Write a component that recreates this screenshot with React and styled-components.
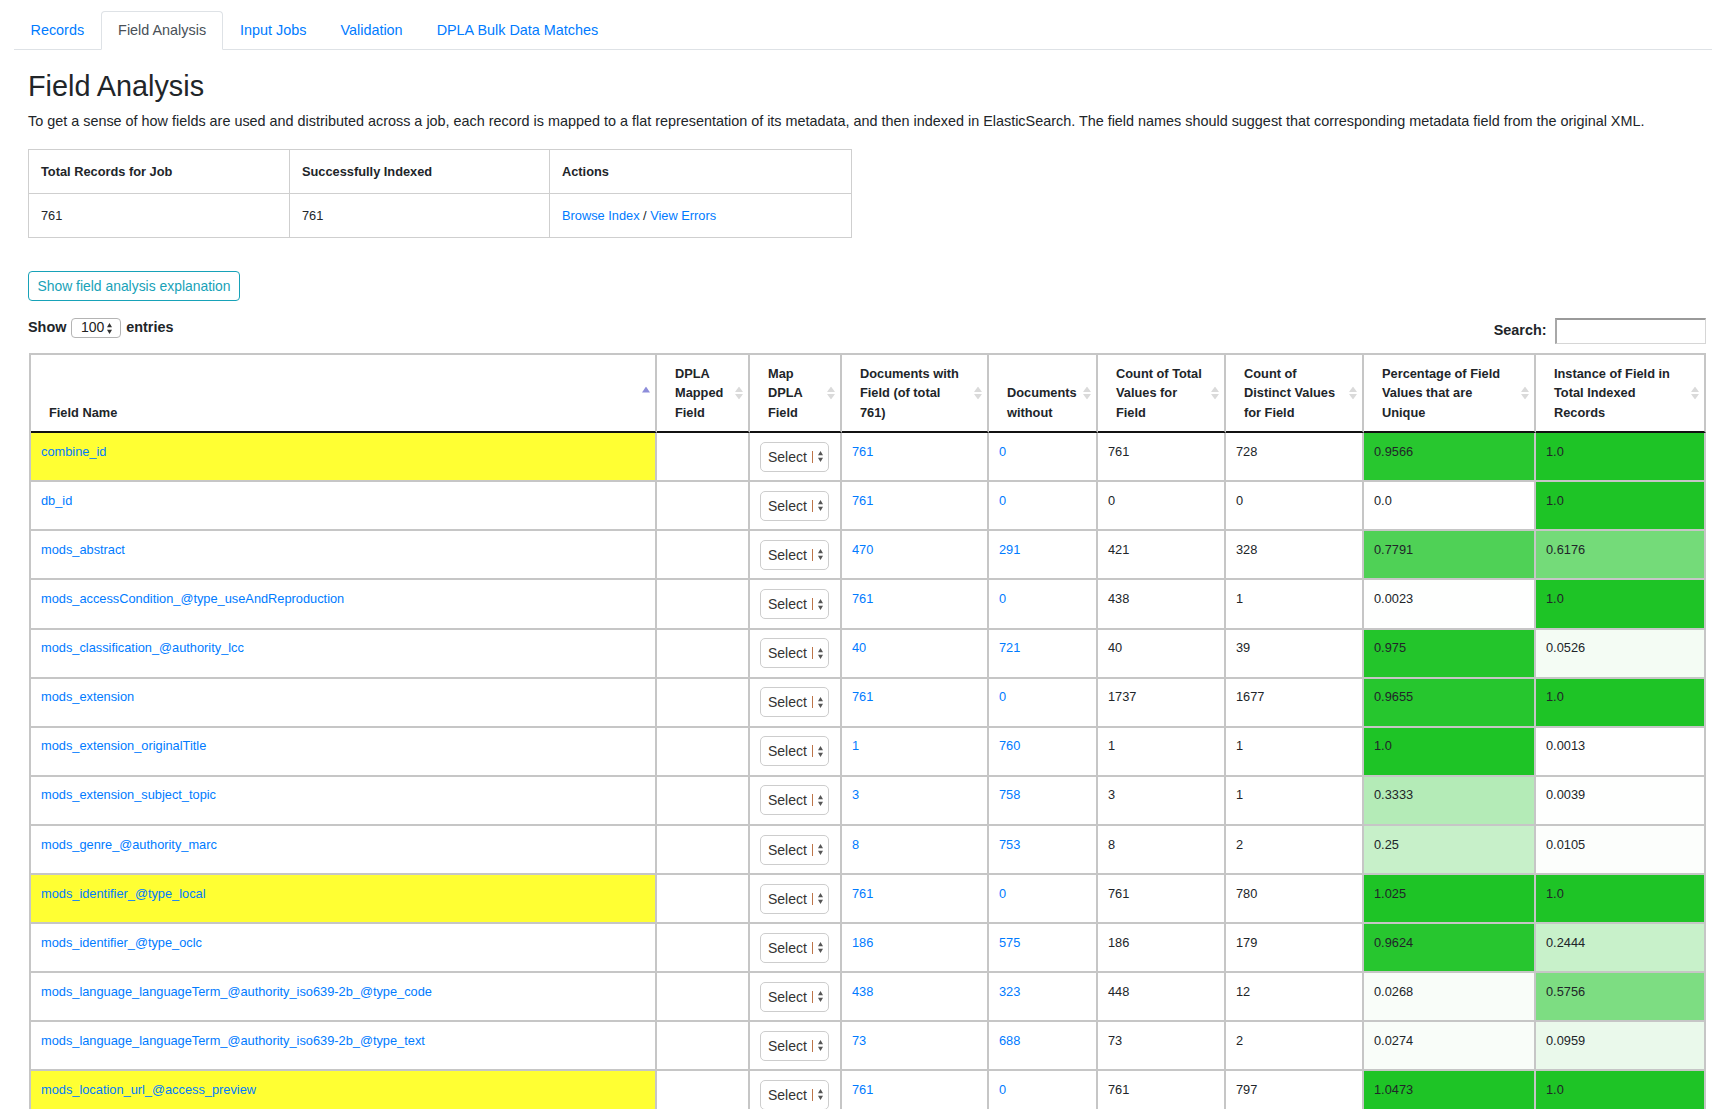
import React from "react";
import styled, { createGlobalStyle } from "styled-components";

const GlobalStyle = createGlobalStyle`
  html { scrollbar-width: none; }
  html::-webkit-scrollbar, body::-webkit-scrollbar { display: none; }
  body {
    margin: 0;
    background: #fff;
    color: #212529;
    font-family: "Liberation Sans", Arial, Helvetica, sans-serif;
    font-size: 14.4px;
    line-height: 1.5;
  }
  * { box-sizing: border-box; }
`;

const Page = styled.div`
  padding-left: 13.5px;
`;

const Tabs = styled.nav`
  display: flex;
  margin-top: 10.7px;
  border-bottom: 1px solid #dee2e6;
`;

const Tab = styled.a`
  display: block;
  margin-bottom: -1px;
  padding: 8px 16px;
  font-size: 14.4px;
  line-height: 21.6px;
  text-decoration: none;
  border: 1px solid transparent;
  border-radius: 4px 4px 0 0;
  color: ${(p) => (p.$active ? "#495057" : "#007bff")};
  background: ${(p) => (p.$active ? "#fff" : "transparent")};
  border-color: ${(p) => (p.$active ? "#dee2e6 #dee2e6 #fff" : "transparent")};
  cursor: pointer;
`;

const Content = styled.main`
  padding-left: 14.5px;
  width: 1692.5px;
`;

const Title = styled.h2`
  margin: 19.2px 0 7px;
  font-size: 28.8px;
  font-weight: 400;
  line-height: 1.2;
`;

const Intro = styled.p`
  margin: 0 0 16.3px;
  font-size: 14.4px;
  line-height: 21.6px;
`;

const SummaryTable = styled.table`
  border-collapse: separate;
  border-spacing: 0;
  table-layout: fixed;
  width: 824px;
  border-top: 1px solid #cfcfcf;
  border-left: 1px solid #cfcfcf;
  font-size: 12.8px;
  line-height: 19.2px;
`;

const SummaryCell = styled.td`
  width: ${(p) => p.$w}px;
  padding: 12px;
  border-right: 1px solid #cfcfcf;
  border-bottom: 1px solid #cfcfcf;
  text-align: left;
  vertical-align: top;
  font-weight: ${(p) => (p.$head ? 700 : 400)};
`;

const Link = styled.a`
  color: #007bff;
  text-decoration: none;
  cursor: pointer;
`;

const OutlineButton = styled.button`
  display: inline-block;
  margin-top: 33px;
  padding: 3.5px 8.5px;
  font-family: inherit;
  font-size: 13.9px;
  line-height: 21px;
  color: #17a2b8;
  background: #fff;
  border: 1px solid #17a2b8;
  border-radius: 4px;
  cursor: pointer;
`;

const Toolbar = styled.div`
  display: flex;
  justify-content: space-between;
  align-items: flex-start;
  margin-top: 16.6px;
  font-size: 14.4px;
  font-weight: 700;
`;

const LengthGroup = styled.label`
  display: flex;
  align-items: center;
  gap: 5px;
  margin-top: -0.5px;
  line-height: 21.6px;
`;

const SearchGroup = styled.label`
  display: flex;
  align-items: center;
  gap: 8px;
  margin-right: 0.5px;
`;

const SearchInput = styled.input`
  width: 151px;
  height: 26px;
  padding: 2px 4px;
  font-family: inherit;
  font-size: 13px;
  border-style: solid;
  border-width: 2px 1px 1px 2px;
  border-color: #9a9a9a #d6d6d6 #d6d6d6 #a8a8a8;
  background: #fff;
  outline: none;
`;

const MiniSelect = styled.span`
  display: inline-flex;
  align-items: center;
  gap: 3px;
  height: 19.6px;
  padding: 0 8px 0 8.5px;
  font-weight: 400;
  font-size: 14px;
  color: #222;
  border: 1px solid #b4b4b4;
  border-radius: 4px;
  background: #fff;
`;

const DataTable = styled.table`
  margin: 8.7px 0 0 1px;
  border-collapse: separate;
  border-spacing: 0;
  table-layout: fixed;
  width: 1677px;
  border-top: 2px solid #c6c6c6;
  border-left: 2px solid #c6c6c6;
  font-size: 12.8px;
  line-height: 19.2px;
`;

const HeadCell = styled.th`
  position: relative;
  width: ${(p) => p.$w}px;
  padding: 9.5px 19px 9.5px 18px;
  border-right: 2px solid #c6c6c6;
  border-bottom: 2px solid #111;
  text-align: left;
  vertical-align: bottom;
  font-weight: 700;
  cursor: pointer;
`;

const SortIcon = styled.svg`
  position: absolute;
  right: 5.5px;
  top: 50%;
  transform: translateY(-50%);
  display: block;
`;

const BodyCell = styled.td`
  padding: 8.56px 10px;
  border-right: 2px solid #c6c6c6;
  border-bottom: 2px solid #c6c6c6;
  vertical-align: top;
  white-space: nowrap;
  overflow: hidden;
  background: ${(p) => p.$bg || "transparent"};
`;

const FieldSelect = styled.span`
  display: inline-flex;
  align-items: center;
  height: 30px;
  padding: 0 5px 0 7px;
  gap: 5px;
  font-size: 14px;
  color: #333;
  border: 1px solid #cdcdcd;
  border-radius: 5px;
  background: #fff;
  cursor: pointer;
`;

const SelectText = styled.span`
  line-height: 20px;
`;

const SelectBar = styled.span`
  display: block;
  width: 1px;
  height: 12px;
  background: #bd7448;
`;

const Arrows = ({ color = "#555" }) => (
  <svg width="5" height="11" viewBox="0 0 5 11" aria-hidden="true">
    <polygon points="0,4.3 2.5,0 5,4.3" fill={color} />
    <polygon points="0,6.7 2.5,11 5,6.7" fill={color} />
  </svg>
);

const SortBoth = () => (
  <SortIcon width="8" height="13" viewBox="0 0 8 13" aria-hidden="true">
    <polygon points="0,5.5 4,0 8,5.5" fill="#dadada" />
    <polygon points="0,7.5 4,13 8,7.5" fill="#dadada" />
  </SortIcon>
);

const SortAsc = () => (
  <SortIcon width="8" height="13" viewBox="0 0 8 13" aria-hidden="true">
    <polygon points="0,6 4,0 8,6" fill="#8d8dda" />
  </SortIcon>
);

const columns = [
  { label: "Field Name", w: 626, asc: true },
  { label: "DPLA Mapped Field", w: 93 },
  { label: "Map DPLA Field", w: 92 },
  { label: "Documents with Field (of total 761)", w: 147 },
  { label: "Documents without", w: 109 },
  { label: "Count of Total Values for Field", w: 128 },
  { label: "Count of Distinct Values for Field", w: 138 },
  { label: "Percentage of Field Values that are Unique", w: 172 },
  { label: "Instance of Field in Total Indexed Records", w: 170 },
];

const rows = [
  ["combine_id", true, "761", "0", "761", "728", "0.9566", "1.0"],
  ["db_id", false, "761", "0", "0", "0", "0.0", "1.0"],
  ["mods_abstract", false, "470", "291", "421", "328", "0.7791", "0.6176"],
  ["mods_accessCondition_@type_useAndReproduction", false, "761", "0", "438", "1", "0.0023", "1.0"],
  ["mods_classification_@authority_lcc", false, "40", "721", "40", "39", "0.975", "0.0526"],
  ["mods_extension", false, "761", "0", "1737", "1677", "0.9655", "1.0"],
  ["mods_extension_originalTitle", false, "1", "760", "1", "1", "1.0", "0.0013"],
  ["mods_extension_subject_topic", false, "3", "758", "3", "1", "0.3333", "0.0039"],
  ["mods_genre_@authority_marc", false, "8", "753", "8", "2", "0.25", "0.0105"],
  ["mods_identifier_@type_local", true, "761", "0", "761", "780", "1.025", "1.0"],
  ["mods_identifier_@type_oclc", false, "186", "575", "186", "179", "0.9624", "0.2444"],
  ["mods_language_languageTerm_@authority_iso639-2b_@type_code", false, "438", "323", "448", "12", "0.0268", "0.5756"],
  ["mods_language_languageTerm_@authority_iso639-2b_@type_text", false, "73", "688", "73", "2", "0.0274", "0.0959"],
  ["mods_location_url_@access_preview", true, "761", "0", "761", "797", "1.0473", "1.0"],
  ["mods_location_url_@usage_primary", false, "761", "0", "761", "761", "1.0", "1.0"],
  ["mods_name_namePart", false, "412", "349", "530", "221", "0.417", "0.5414"],
];

const greenFor = (v) => {
  const a = Math.max(0, Math.min(parseFloat(v), 1));
  return `rgba(30, 196, 38, ${a})`;
};

const tabs = ["Records", "Field Analysis", "Input Jobs", "Validation", "DPLA Bulk Data Matches"];

export default function App() {
  return (
    <Page>
      <GlobalStyle />
      <Tabs>
        {tabs.map((t) => (
          <Tab key={t} $active={t === "Field Analysis"}>
            {t}
          </Tab>
        ))}
      </Tabs>
      <Content>
        <Title>Field Analysis</Title>
        <Intro>
          To get a sense of how fields are used and distributed across a job, each record is mapped to a flat
          representation of its metadata, and then indexed in ElasticSearch. The field names should suggest that
          corresponding metadata field from the original XML.
        </Intro>
        <SummaryTable>
          <thead>
            <tr>
              <SummaryCell as="th" $head $w={261}>Total Records for Job</SummaryCell>
              <SummaryCell as="th" $head $w={260}>Successfully Indexed</SummaryCell>
              <SummaryCell as="th" $head $w={302}>Actions</SummaryCell>
            </tr>
          </thead>
          <tbody>
            <tr>
              <SummaryCell>761</SummaryCell>
              <SummaryCell>761</SummaryCell>
              <SummaryCell>
                <Link>Browse Index</Link> / <Link>View Errors</Link>
              </SummaryCell>
            </tr>
          </tbody>
        </SummaryTable>
        <OutlineButton>Show field analysis explanation</OutlineButton>
        <Toolbar>
          <LengthGroup>
            Show
            <MiniSelect>
              100
              <Arrows color="#333" />
            </MiniSelect>
            entries
          </LengthGroup>
          <SearchGroup>
            Search:
            <SearchInput type="search" />
          </SearchGroup>
        </Toolbar>
        <DataTable>
          <thead>
            <tr>
              {columns.map((c) => (
                <HeadCell key={c.label} $w={c.w}>
                  {c.label}
                  {c.asc ? <SortAsc /> : <SortBoth />}
                </HeadCell>
              ))}
            </tr>
          </thead>
          <tbody>
            {rows.map(([name, hl, withF, without, total, distinct, pct, inst]) => (
              <tr key={name}>
                <BodyCell $bg={hl ? "#ffff33" : undefined}>
                  <Link>{name}</Link>
                </BodyCell>
                <BodyCell />
                <BodyCell>
                  <FieldSelect>
                    <SelectText>Select</SelectText>
                    <SelectBar />
                    <Arrows />
                  </FieldSelect>
                </BodyCell>
                <BodyCell>
                  <Link>{withF}</Link>
                </BodyCell>
                <BodyCell>
                  <Link>{without}</Link>
                </BodyCell>
                <BodyCell>{total}</BodyCell>
                <BodyCell>{distinct}</BodyCell>
                <BodyCell $bg={greenFor(pct)}>{pct}</BodyCell>
                <BodyCell $bg={greenFor(inst)}>{inst}</BodyCell>
              </tr>
            ))}
          </tbody>
        </DataTable>
      </Content>
    </Page>
  );
}
